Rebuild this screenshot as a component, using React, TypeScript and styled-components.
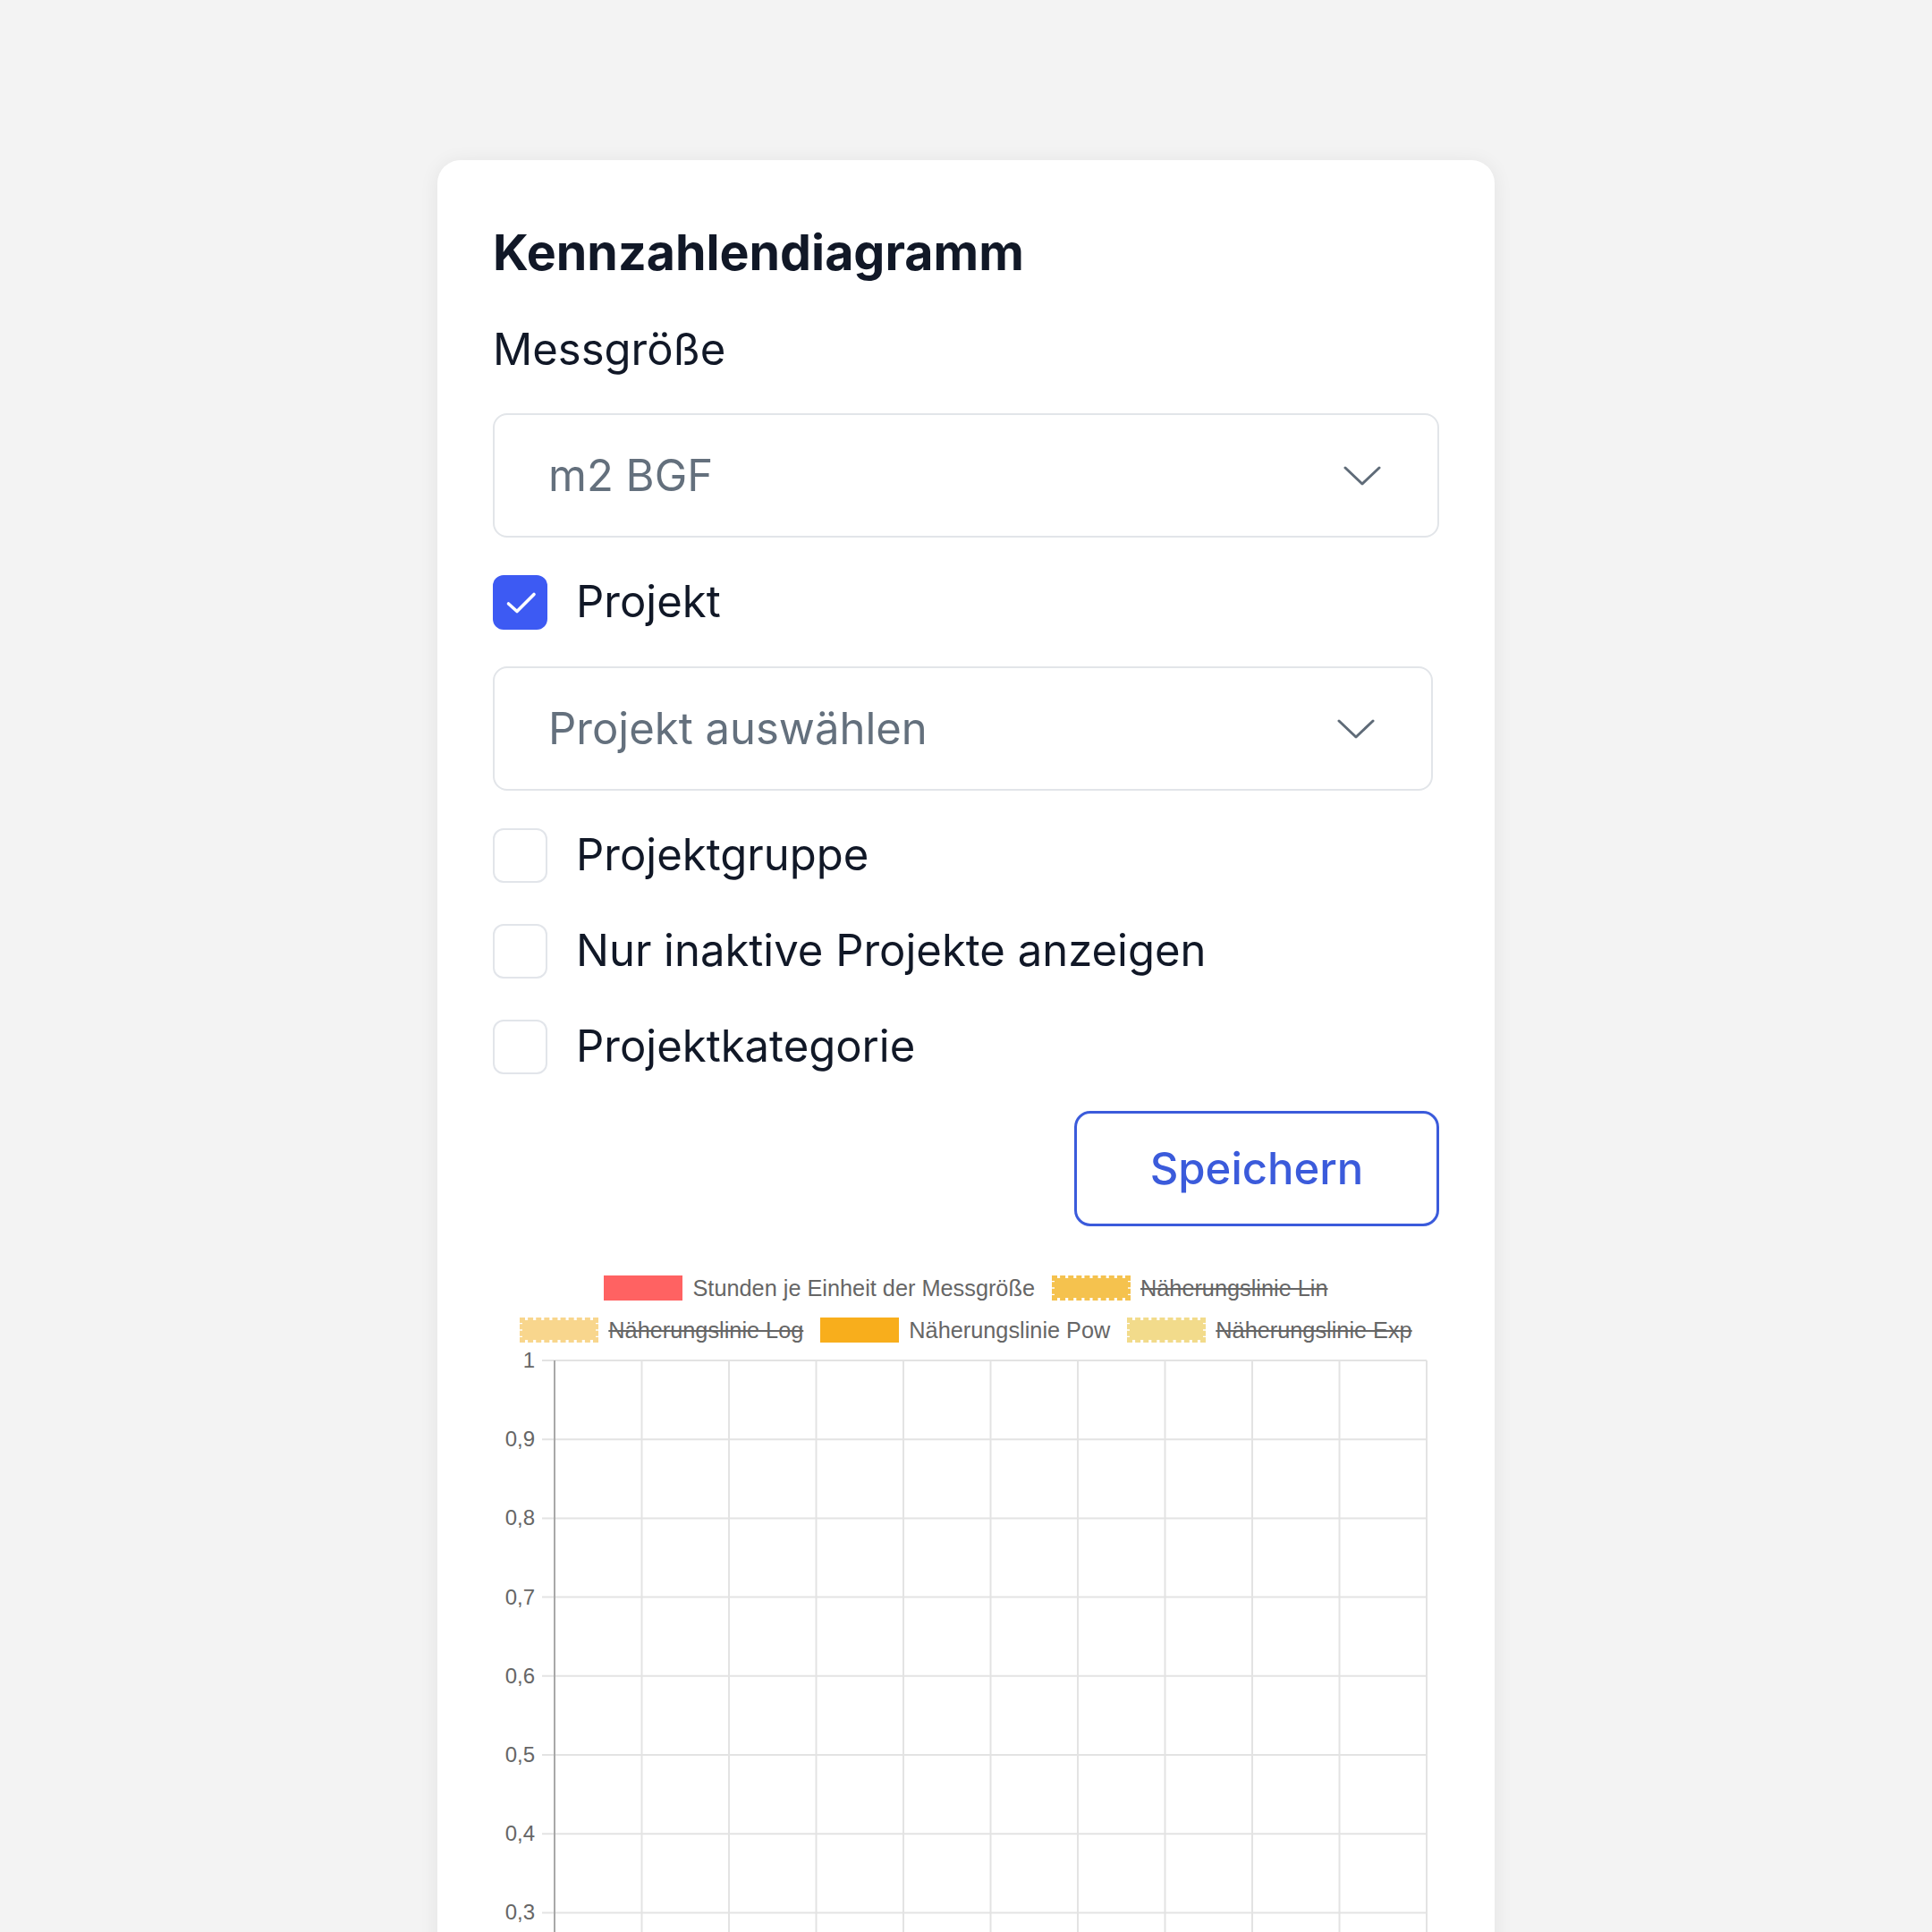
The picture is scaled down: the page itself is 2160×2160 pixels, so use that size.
import React from 'react';
import styled, { createGlobalStyle } from 'styled-components';

const GlobalStyle = createGlobalStyle`
  html, body {
    margin: 0;
    padding: 0;
    background: #f3f3f3;
  }
  body {
    font-family: Inter, "Noto Sans", sans-serif;
    color: #111827;
  }
`;

// only the ticks that fit above the fold are drawn
const TICKS = [1, 0.9, 0.8, 0.7, 0.6, 0.5, 0.4, 0.3];
const COLUMNS = 10;

const LEGEND = [
  [
    { label: 'Stunden je Einheit der Messgröße', color: '#ff6262', hidden: false, dashed: false },
    { label: 'Näherungslinie Lin', color: '#f5c24e', hidden: true, dashed: true },
  ],
  [
    { label: 'Näherungslinie Log', color: '#f8d68d', hidden: true, dashed: true },
    { label: 'Näherungslinie Pow', color: '#f8ae1c', hidden: false, dashed: false },
    { label: 'Näherungslinie Exp', color: '#f2db8b', hidden: true, dashed: true },
  ],
];

const Chevron = () => (
  <svg width="42" height="24" viewBox="0 0 42 24" fill="none">
    <polyline points="2,3 21,21 40,3" stroke="#5f6b78" strokeWidth="3" strokeLinecap="round" strokeLinejoin="round" />
  </svg>
);

const Check = () => (
  <svg width="61" height="61" viewBox="0 0 61 61" fill="none">
    <polyline points="17.5,32 27,40.5 46,21.5" stroke="#ffffff" strokeWidth="3.6" strokeLinecap="round" strokeLinejoin="round" />
  </svg>
);

const Chart = () => {
  const left = 69;
  const right = 1044;
  const top = 17;
  const step = 88.2;
  const colW = (right - left) / COLUMNS;
  const height = 660;
  return (
    <ChartSvg width="1057" height={height} viewBox={`0 0 1057 ${height}`}>
      {TICKS.map((t, i) => (
        <g key={t}>
          <line x1={55} x2={right} y1={top + i * step} y2={top + i * step} stroke="#e3e3e3" strokeWidth="2" />
          <text x={47} y={top + i * step + 8} textAnchor="end" fontSize="24" fill="#666">
            {t.toString().replace('.', ',')}
          </text>
        </g>
      ))}
      {Array.from({ length: COLUMNS }, (_, i) => (
        <line key={i} x1={left + (i + 1) * colW} x2={left + (i + 1) * colW} y1={top} y2={height} stroke="#e3e3e3" strokeWidth="2" />
      ))}
      <line x1={left} x2={left} y1={top} y2={height} stroke="#a8a8a8" strokeWidth="2" />
    </ChartSvg>
  );
};

export default function App() {
  return (
    <>
      <GlobalStyle />
      <Page>
        <Card>
          <Title>Kennzahlendiagramm</Title>
          <FieldLabel>Messgröße</FieldLabel>
          <Select>
            <SelectValue>m2 BGF</SelectValue>
            <Chevron />
          </Select>
          <CheckRow>
            <Box $checked>
              <Check />
            </Box>
            <CheckLabel>Projekt</CheckLabel>
          </CheckRow>
          <Select $narrow>
            <SelectValue>Projekt auswählen</SelectValue>
            <Chevron />
          </Select>
          <CheckGroup>
            <CheckRow>
              <Box />
              <CheckLabel>Projektgruppe</CheckLabel>
            </CheckRow>
            <CheckRow>
              <Box />
              <CheckLabel>Nur inaktive Projekte anzeigen</CheckLabel>
            </CheckRow>
            <CheckRow>
              <Box />
              <CheckLabel>Projektkategorie</CheckLabel>
            </CheckRow>
          </CheckGroup>
          <SaveButton>Speichern</SaveButton>
          <ChartArea>
            <Legend>
              {LEGEND.map((row, r) => (
                <LegendRow key={r}>
                  {row.map((item) => (
                    <LegendItem key={item.label}>
                      <Swatch $color={item.color} $dashed={item.dashed} />
                      <LegendText $hidden={item.hidden}>{item.label}</LegendText>
                    </LegendItem>
                  ))}
                </LegendRow>
              ))}
            </Legend>
            <Chart />
          </ChartArea>
        </Card>
      </Page>
    </>
  );
}

const Page = styled.div`
  display: flex;
  justify-content: center;
  align-items: flex-start;
  padding-top: 179px;
  height: 2160px;
  overflow: hidden;
  box-sizing: border-box;
`;

const Card = styled.div`
  width: 1182px;
  box-sizing: border-box;
  background: #ffffff;
  border-radius: 26px;
  box-shadow: 0 2px 22px rgba(0, 0, 0, 0.07);
  padding: 68px 62px 80px;
  display: flex;
  flex-direction: column;
  gap: 42px;
  flex-shrink: 0;
`;

const Title = styled.h1`
  margin: 0;
  font-size: 55.5px;
  line-height: 70px;
  font-weight: 700;
  color: #111827;
`;

const FieldLabel = styled.div`
  font-size: 49px;
  line-height: 62px;
  color: #111827;
  margin-top: 1px;
  margin-bottom: -2px;
`;

const Select = styled.div<{ $narrow?: boolean }>`
  height: 139px;
  flex-shrink: 0;
  box-sizing: border-box;
  border: 2px solid #e2e5e9;
  border-radius: 16px;
  display: flex;
  align-items: center;
  justify-content: space-between;
  padding: 0 63px 0 60px;
  margin-right: ${(p) => (p.$narrow ? '7px' : '0')};
`;

const SelectValue = styled.span`
  font-size: 49px;
  color: #64707d;
`;

const CheckGroup = styled.div`
  display: flex;
  flex-direction: column;
  gap: 47px;
`;

const CheckRow = styled.label`
  display: flex;
  align-items: center;
  gap: 32px;
  height: 60px;
  flex-shrink: 0;
`;

const Box = styled.span<{ $checked?: boolean }>`
  width: 61px;
  height: 61px;
  box-sizing: border-box;
  border-radius: 12px;
  border: ${(p) => (p.$checked ? '0' : '2px solid #e2e5ea')};
  background: ${(p) => (p.$checked ? '#3d5af3' : '#ffffff')};
  display: flex;
  align-items: center;
  justify-content: center;
  flex-shrink: 0;
`;

const CheckLabel = styled.span`
  font-size: 49px;
  line-height: 60px;
  color: #111827;
`;

const SaveButton = styled.button`
  align-self: flex-end;
  flex-shrink: 0;
  width: 408px;
  height: 129px;
  background: #ffffff;
  border: 3px solid #3b5bdb;
  border-radius: 18px;
  color: #3b5bdb;
  font-family: Inter, "Noto Sans", sans-serif;
  font-size: 49px;
  font-weight: 500;
  cursor: pointer;
`;

const ChartArea = styled.div`
  margin-top: 13px;
  display: flex;
  flex-direction: column;
  gap: 3px;
`;

const Legend = styled.div`
  display: flex;
  flex-direction: column;
  align-items: center;
  gap: 19px;
`;

const LegendRow = styled.div`
  display: flex;
  gap: 19px;
  height: 28px;
  align-items: center;
`;

const LegendItem = styled.div`
  display: flex;
  align-items: center;
  gap: 11px;
`;

const Swatch = styled.span<{ $color: string; $dashed: boolean }>`
  width: 88px;
  height: 28px;
  box-sizing: border-box;
  background: ${(p) => p.$color};
  background-clip: padding-box;
  border: 3px ${(p) => (p.$dashed ? 'dashed' : 'solid')} ${(p) => p.$color};
`;

const LegendText = styled.span<{ $hidden: boolean }>`
  font-family: "Liberation Sans", Arial, sans-serif;
  font-size: 25.3px;
  color: #666666;
  text-decoration: ${(p) => (p.$hidden ? 'line-through' : 'none')};
  text-decoration-thickness: 2px;
`;

const ChartSvg = styled.svg`
  display: block;
  font-family: "Liberation Sans", Arial, sans-serif;
`;
